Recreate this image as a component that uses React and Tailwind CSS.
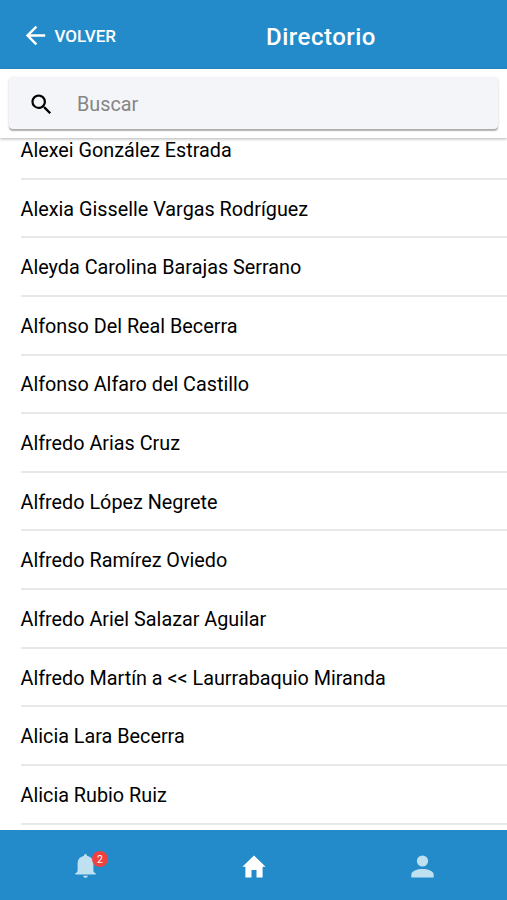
import React from 'react';
import { MdArrowBack, MdSearch } from 'react-icons/md';

const contacts = [
    'Alexei González Estrada',
    'Alexia Gisselle Vargas Rodríguez',
    'Aleyda Carolina Barajas Serrano',
    'Alfonso Del Real Becerra',
    'Alfonso Alfaro del Castillo',
    'Alfredo Arias Cruz',
    'Alfredo López Negrete',
    'Alfredo Ramírez Oviedo',
    'Alfredo Ariel Salazar Aguilar',
    'Alfredo Martín a << Laurrabaquio Miranda',
    'Alicia Lara Becerra',
    'Alicia Rubio Ruiz',
];

const BellIcon = () => (
    <svg viewBox="0 0 21 24" className="w-[21px] h-6" fill="currentColor">
        <path d="M10.5 0C9.5 0 9 0.9 8.9 2C5 2.6 2.6 5.6 2.6 9.5V16.4C2.6 17.6 2 18.3 0.3 19.3V20.6H20.7V19.3C19 18.3 18.4 17.6 18.4 16.4V9.5C18.4 5.6 16 2.6 12.1 2C12 0.9 11.5 0 10.5 0Z" />
        <path d="M8.2 21.7H12.8C12.6 23.1 11.8 23.8 10.5 23.8S8.4 23.1 8.2 21.7Z" />
    </svg>
);

const HomeIcon = () => (
    <svg viewBox="0 0 24 23" className="w-6 h-[23px]" fill="currentColor">
        <path d="M12 0.5L23.6 11.8H20.6V22.4H14.5V15H9.5V22.4H3.4V11.8H0.4Z" />
    </svg>
);

const PersonIcon = () => (
    <svg viewBox="0 0 23 23" className="w-[23px] h-[23px]" fill="currentColor">
        <circle cx="11.5" cy="6" r="5.6" />
        <path d="M0.3 22.5V19.7C0.3 16 6.3 14.1 11.5 14.1S22.7 16 22.7 19.7V22.5Z" />
    </svg>
);

const Header = () => (
    <header className="h-[69px] shrink-0 bg-[#248bca] text-white grid grid-cols-[135px_1fr] items-center pt-0.5">
        <button className="flex items-center gap-[5px] pl-[20.5px] text-[17px] font-medium">
            <MdArrowBack className="w-[29px] h-[29px] shrink-0" />
            <span className="pt-0.5">VOLVER</span>
        </button>
        <h1 className="pt-0.5 text-center text-[24px] font-medium tracking-[0.5px]">Directorio</h1>
    </header>
);

const SearchBar = () => (
    <div className="relative z-10 h-[69px] shrink-0 bg-white px-[9px] pt-[8px] shadow-[0_1px_3px_rgba(0,0,0,0.3)]">
        <label className="flex items-center h-[52px] pt-0.5 bg-[#f4f5f9] rounded-sm shadow-[0_2px_1px_rgba(0,0,0,0.25),0_1px_3px_rgba(0,0,0,0.14)]">
            <MdSearch className="ml-[19px] w-[27px] h-[27px] text-black" />
            <input
                type="text"
                placeholder="Buscar"
                className="ml-[22px] pt-0.5 w-80 bg-transparent text-[19.8px] outline-none placeholder:text-[#858585]"
            />
        </label>
    </div>
);

const TabBar = () => (
    <nav className="h-[70px] shrink-0 bg-[#248bca] grid grid-cols-3 place-items-center pt-0.5">
        <button className="relative ml-0.5 text-[#bfe0f0]">
            <BellIcon />
            <span className="absolute -top-[3px] -right-3 w-4 h-4 rounded-full bg-[#f04141] text-white text-[10.5px] leading-[17px] text-center">
                2
            </span>
        </button>
        <button className="text-white">
            <HomeIcon />
        </button>
        <button className="text-[#bfe0f0]">
            <PersonIcon />
        </button>
    </nav>
);

const App = () => (
    <div className="h-screen flex flex-col overflow-hidden bg-white font-['Roboto',sans-serif]">
        <Header />
        <SearchBar />
        <main className="flex-1 min-h-0 overflow-hidden">
            <ul className="-mt-[17px] pl-[20.5px]">
                {contacts.map((name) => (
                    <li
                        key={name}
                        className="h-[58.65px] flex items-center border-b-2 border-[#e8e8e8] pt-[3px] text-[19.8px] leading-none text-black whitespace-nowrap"
                    >
                        {name}
                    </li>
                ))}
            </ul>
        </main>
        <TabBar />
    </div>
);

export default App;
